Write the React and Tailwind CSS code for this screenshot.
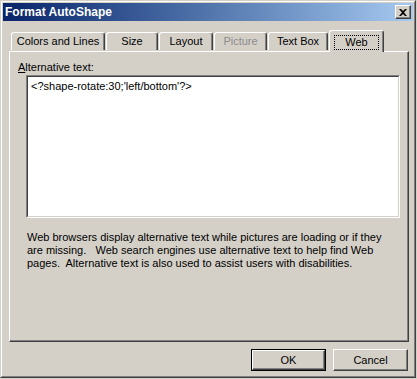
import React from 'react'

const font = { fontFamily: '"Liberation Sans", Arial, sans-serif' }

const tabs = [
  { label: 'Colors and Lines', w: 'w-[94px]', ml: 'ml-0' },
  { label: 'Size', w: 'w-[52px]', ml: 'ml-[1px]' },
  { label: 'Layout', w: 'w-[54px]', ml: 'ml-[1px]' },
  { label: 'Picture', w: 'w-[53px]', ml: 'ml-[1px]', disabled: true },
  { label: 'Text Box', w: 'w-[60px]', ml: 'ml-[1px]' },
]

const Tab = ({ label, w, ml, disabled }) => (
  <div
    className={`${w} ${ml} h-[18px] mb-[1px] flex items-center justify-center border-t border-l border-white border-r border-r-[#404040] rounded-t-[3px] shadow-[inset_-1px_0_#808080] ${
      disabled ? 'text-[#8c8c8c]' : 'text-black'
    }`}
  >
    {label}
  </div>
)

const Button = ({ children, isDefault }) => (
  <div className={isDefault ? 'border border-black' : ''}>
    <div
      className={`${
        isDefault ? 'w-[73px] h-[20px]' : 'w-[75px] h-[22px]'
      } flex items-center justify-center border-t border-l border-white border-r border-b border-r-[#404040] border-b-[#404040] shadow-[inset_-1px_-1px_#808080] text-black`}
    >
      {children}
    </div>
  </div>
)

export default function App() {
  return (
    <div className="w-[417px] h-[379px] bg-[#d4d0c8] text-[11px] leading-[13px]" style={font}>
      <div className="w-[416px] h-[378px] border border-[#d4d0c8] border-r-[#404040] border-b-[#404040]">
        <div className="h-full border border-white border-r-[#808080] border-b-[#808080] p-[1px] flex flex-col">
          {/* title bar */}
          <div className="h-[18px] bg-gradient-to-r from-[#0a246a] to-[#a6caf0] flex items-center justify-between pl-[2px] pr-[2px]">
            <span className="text-white font-bold text-[12px]">Format AutoShape</span>
            <div className="w-[16px] h-[14px] bg-[#d4d0c8] border-t border-l border-white border-r border-b border-r-[#404040] border-b-[#404040] shadow-[inset_-1px_-1px_#808080] flex items-center justify-center">
              <svg width="8" height="7" viewBox="0 0 8 7">
                <path d="M0 0h2l2 2 2-2h2L5 3.5 8 7H6L4 5 2 7H0l3-3.5z" fill="#000" />
              </svg>
            </div>
          </div>

          {/* tabs */}
          <div className="mt-[8px] ml-[8px] flex items-end h-[22px]">
            {tabs.map((t) => (
              <Tab key={t.label} {...t} />
            ))}
            <div className="w-[55px] h-[22px] ml-[1px] -mb-[1px] relative z-10 bg-[#d4d0c8] flex items-start justify-center pt-[4px] border-t border-l border-white border-r border-r-[#404040] rounded-t-[3px] shadow-[inset_-1px_0_#808080]">
              <span className="px-[10px] h-[15px] leading-[13px] border border-dotted border-black">Web</span>
            </div>
          </div>

          {/* panel */}
          <div className="ml-[6px] w-[400px] h-[291px] border-t border-l border-white border-r border-b border-r-[#404040] border-b-[#404040] shadow-[inset_-1px_-1px_#808080] pl-[8px] pt-[9px]">
            <div>
              <span className="underline">A</span>lternative text:
            </div>
            <div className="ml-[8px] mt-[1px] w-[374px] h-[143px] border border-[#808080] border-r-white border-b-white">
              <div className="h-full bg-white border border-[#404040] border-r-[#d4d0c8] border-b-[#d4d0c8] pl-[3px] pt-[3px]">
                {"<?shape-rotate:30;'left/bottom'?>"}
              </div>
            </div>
            <p className="ml-[9px] mt-[13px] w-[365px] whitespace-pre">
              {'Web browsers display alternative text while pictures are loading or if they\nare missing.   Web search engines use alternative text to help find Web\npages.  Alternative text is also used to assist users with disabilities.'}
            </p>
          </div>

          {/* buttons */}
          <div className="flex justify-end gap-[7px] mt-[7px] pr-[5px]">
            <Button isDefault>OK</Button>
            <Button>Cancel</Button>
          </div>
        </div>
      </div>
    </div>
  )
}
